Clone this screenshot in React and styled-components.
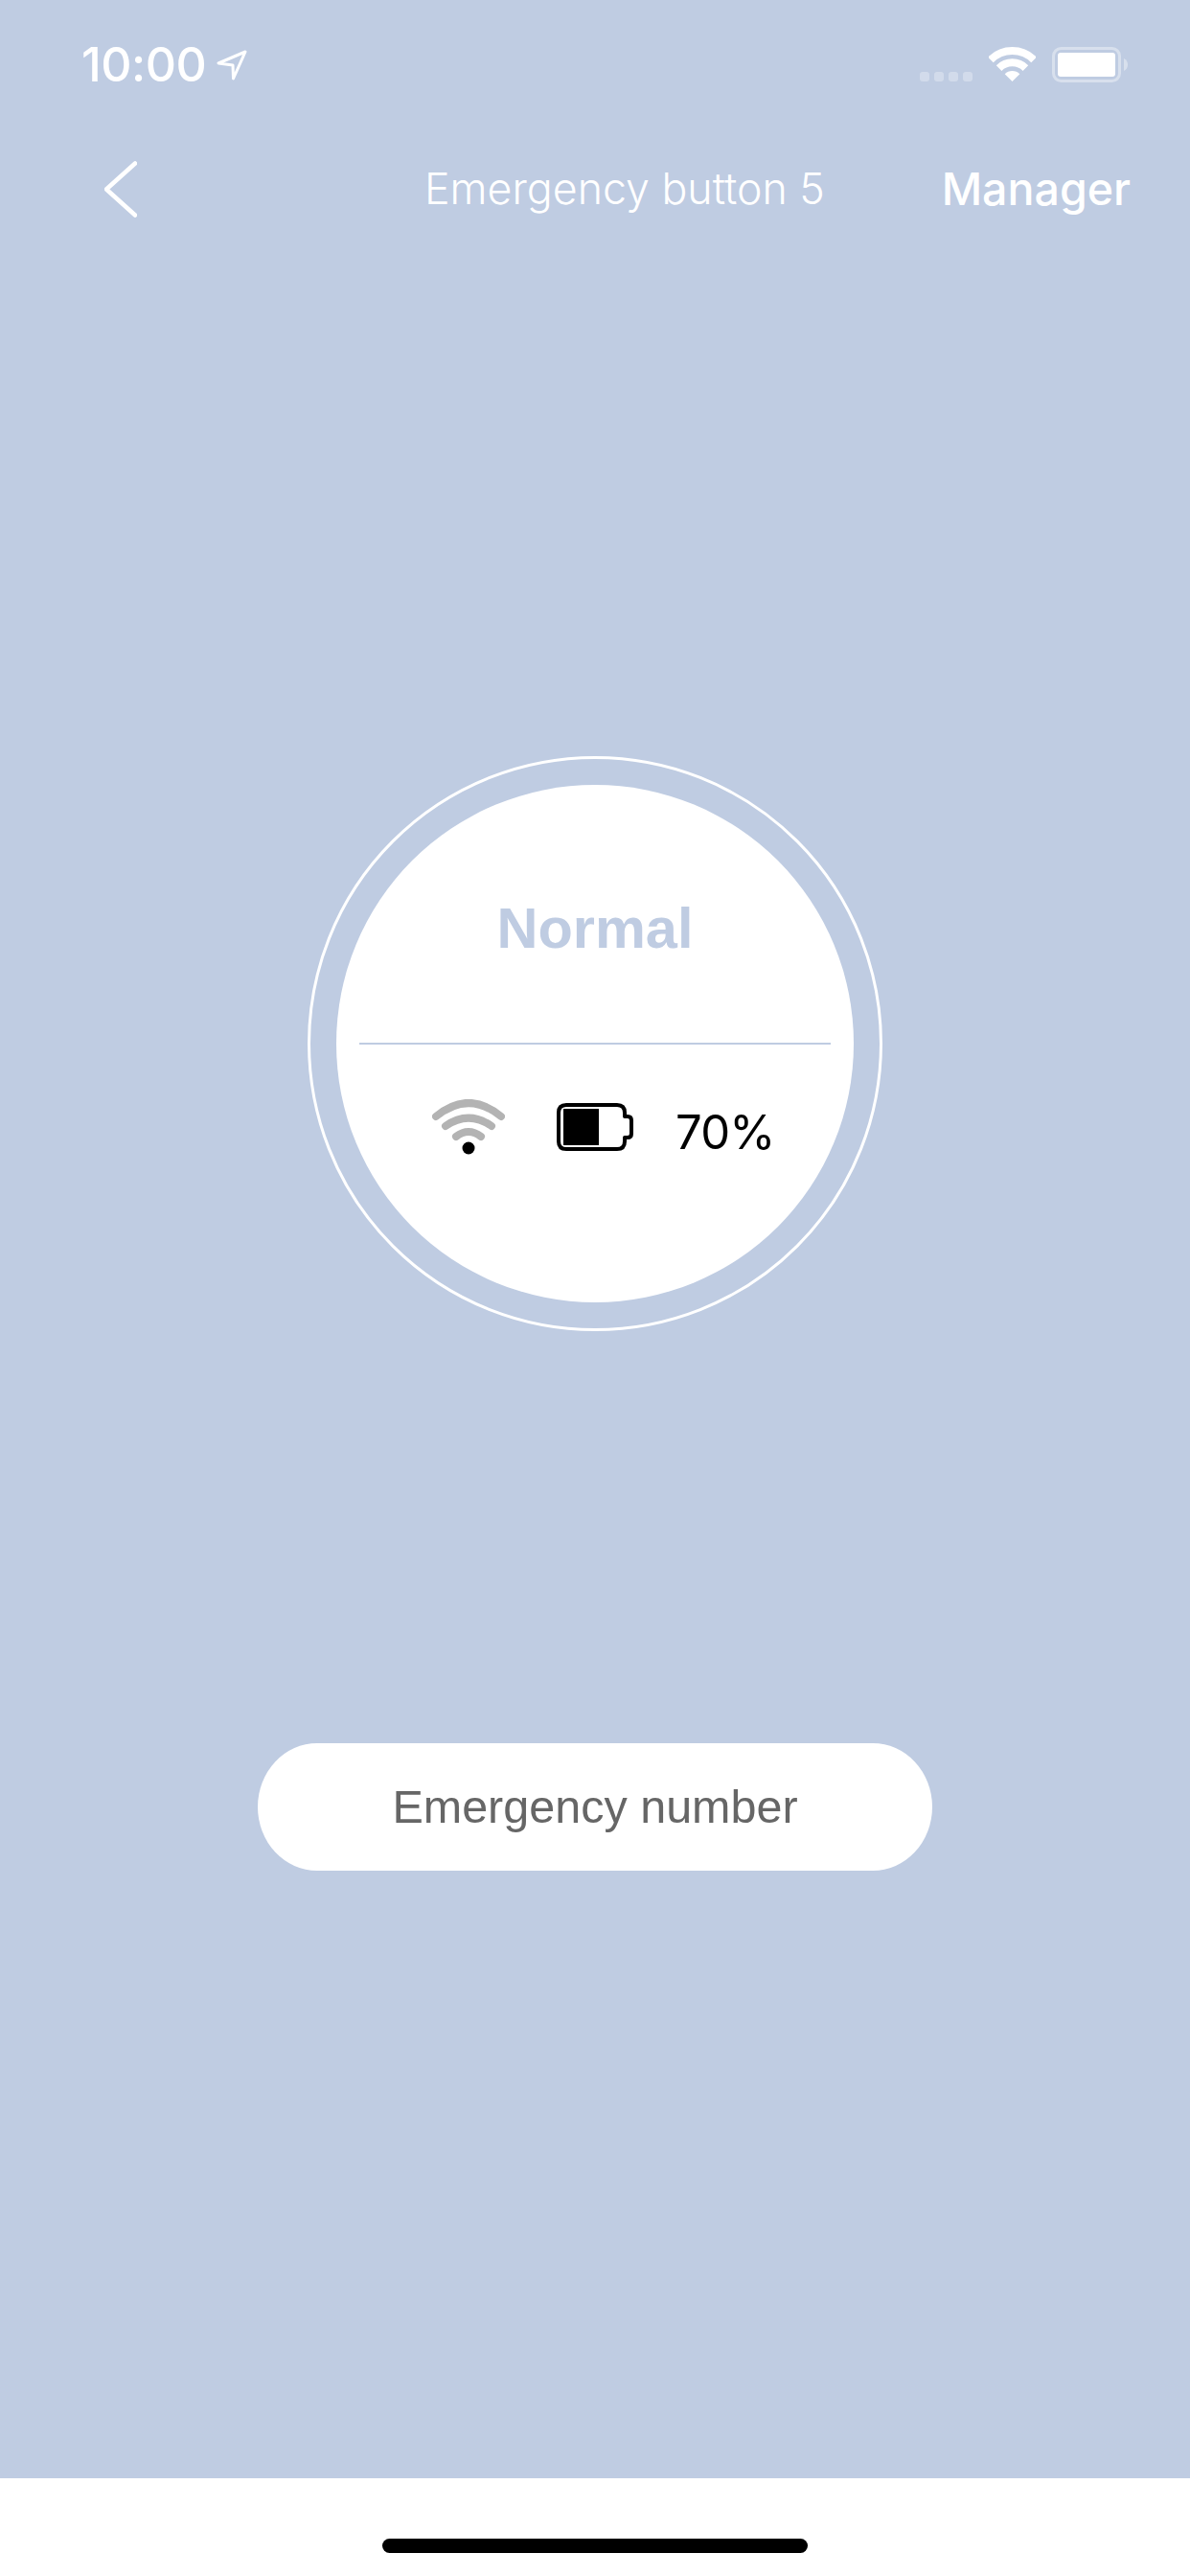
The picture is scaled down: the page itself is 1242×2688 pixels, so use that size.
import styled, { createGlobalStyle } from 'styled-components';

const brand = '#bfcce2';

const GlobalStyle = createGlobalStyle`
  html, body {
    margin: 0;
    padding: 0;
    background: #fff;
  }
`;

const Page = styled.div`
  width: 1242px;
  height: 2688px;
  display: flex;
  flex-direction: column;
  overflow: hidden;
`;

const Main = styled.main`
  flex: 1;
  background: ${brand};
  display: flex;
  flex-direction: column;
`;

const StatusBar = styled.div`
  box-sizing: border-box;
  height: 86px;
  padding: 49px 65px 0 85px;
  display: flex;
  justify-content: space-between;
  align-items: center;
`;

const TimeGroup = styled.div`
  display: flex;
  align-items: center;
  gap: 11px;
`;

const Time = styled.span`
  font: 500 50px/37px Inter, sans-serif;
  letter-spacing: -0.5px;
  color: #fff;
`;

const ArrowIcon = styled.svg`
  display: block;
`;

const StatusIcons = styled.div`
  display: flex;
  align-items: flex-start;
  height: 37px;
`;

const SignalDots = styled.div`
  display: flex;
  gap: 5px;
  margin: 26px 17px 0 0;
`;

const SignalDot = styled.span`
  width: 10px;
  height: 10px;
  border-radius: 3px;
  background: rgba(255, 255, 255, 0.3);
`;

const StatusWifi = styled.svg`
  display: block;
  margin-right: 17px;
`;

const StatusBattery = styled.svg`
  display: block;
`;

const Nav = styled.nav`
  box-sizing: border-box;
  height: 59px;
  margin-top: 82px;
  padding: 0 62px 0 109px;
  display: flex;
  align-items: center;
`;

const BackIcon = styled.svg`
  display: block;
`;

const NavTitle = styled.span`
  margin-left: 300px;
  font: 300 44.7px/1 Inter, sans-serif;
  color: #fff;
`;

const NavAction = styled.span`
  margin-left: auto;
  font: 500 46.5px/1 Inter, sans-serif;
  color: #fff;
`;

const Ring = styled.div`
  box-sizing: border-box;
  width: 600px;
  height: 600px;
  margin: 562px auto 0;
  border: 3px solid #fff;
  border-radius: 50%;
  display: flex;
  align-items: center;
  justify-content: center;
`;

const Dial = styled.div`
  width: 540px;
  height: 540px;
  border-radius: 50%;
  background: #fff;
  display: flex;
  flex-direction: column;
  align-items: center;
`;

const StateLabel = styled.div`
  height: 269px;
  padding-top: 117px;
  box-sizing: border-box;
  font: 700 59.5px/66px "Liberation Sans", Arial, sans-serif;
  color: ${brand};
`;

const Divider = styled.div`
  flex: none;
  width: 492px;
  height: 2px;
  background: ${brand};
`;

const Readings = styled.div`
  align-self: stretch;
  height: 58px;
  margin-top: 57px;
  padding-left: 100px;
  display: flex;
  align-items: center;
`;

const DeviceWifi = styled.svg`
  display: block;
`;

const DeviceBattery = styled.svg`
  display: block;
  margin-left: 54px;
`;

const Percent = styled.span`
  margin: 10px 0 0 44px;
  font: 400 49px/1 Inter, sans-serif;
  letter-spacing: -0.8px;
  color: #000;
`;

const NumberButton = styled.button`
  display: block;
  width: 704px;
  height: 133px;
  margin: 430px auto 0;
  padding: 0;
  border: none;
  border-radius: 62px / 66.5px;
  background: #fff;
  font: 400 48.5px/1 "Liberation Sans", Arial, sans-serif;
  color: #666;
`;

const HomeArea = styled.div`
  flex: none;
  box-sizing: border-box;
  height: 102px;
  padding-top: 63px;
  background: #fff;
`;

const HomeBar = styled.div`
  width: 444px;
  height: 15px;
  margin: 0 auto;
  border-radius: 8px;
  background: #000;
`;

function App() {
  return (
    <Page>
      <GlobalStyle />
      <Main>
        <StatusBar>
          <TimeGroup>
            <Time>10:00</Time>
            <ArrowIcon width="32" height="32" viewBox="0 0 32 32" fill="none">
              <path d="M30 2 L2 14 L17 16 L17.5 30 Z" stroke="#fff" strokeWidth="3" strokeLinejoin="round" />
            </ArrowIcon>
          </TimeGroup>
          <StatusIcons>
            <SignalDots>
              {[0, 1, 2, 3].map((i) => <SignalDot key={i} />)}
            </SignalDots>
            <StatusWifi width="49" height="36" viewBox="0 0 49 36" fill="none">
              <path d="M1.9 13.4 A32 32 0 0 1 47.1 13.4" stroke="#fff" strokeWidth="8" />
              <path d="M10.6 22.1 A19.7 19.7 0 0 1 38.4 22.1" stroke="#fff" strokeWidth="8" />
              <path d="M16.7 28.2 A11 11 0 0 1 32.3 28.2 L24.5 36 Z" fill="#fff" />
            </StatusWifi>
            <StatusBattery width="79" height="37" viewBox="0 0 79 37" fill="none">
              <rect x="1.5" y="1.5" width="69" height="34" rx="8" stroke="#fff" strokeOpacity="0.4" strokeWidth="3" />
              <rect x="6" y="6" width="60" height="25" rx="3" fill="#fff" />
              <path d="M75 12 C78 13.5 79 16 79 18.5 C79 21 78 23.5 75 25 Z" fill="#fff" fillOpacity="0.4" />
            </StatusBattery>
          </StatusIcons>
        </StatusBar>

        <Nav>
          <BackIcon width="34" height="59" viewBox="0 0 34 59" fill="none">
            <path d="M32 2.5 L2 29.5 L32 56.5" stroke="#fff" strokeWidth="4.5" strokeLinecap="round" strokeLinejoin="round" />
          </BackIcon>
          <NavTitle>Emergency button 5</NavTitle>
          <NavAction>Manager</NavAction>
        </Nav>

        <Ring>
          <Dial>
            <StateLabel>Normal</StateLabel>
            <Divider />
            <Readings>
              <DeviceWifi width="76" height="58" viewBox="0 0 76 58" fill="none">
                <path d="M4 18 Q38 -10 72 18" stroke="#b3b3b3" strokeWidth="8" strokeLinecap="round" />
                <path d="M14 28 Q38 11.4 62 28" stroke="#b3b3b3" strokeWidth="8" strokeLinecap="round" />
                <path d="M25 39 Q38 29 51 39" stroke="#b3b3b3" strokeWidth="8" strokeLinecap="round" />
                <circle cx="38" cy="51" r="6.5" fill="#000" />
              </DeviceWifi>
              <DeviceBattery width="80" height="50" viewBox="0 0 80 50" fill="none">
                <path d="M10 2 H63 Q71 2 71 10 V14 H74 Q78 14 78 18 V32 Q78 36 74 36 H71 V40 Q71 48 63 48 H10 Q2 48 2 40 V10 Q2 2 10 2 Z" stroke="#000" strokeWidth="4" strokeLinejoin="round" />
                <rect x="7" y="6" width="37" height="38" fill="#000" />
              </DeviceBattery>
              <Percent>70%</Percent>
            </Readings>
          </Dial>
        </Ring>

        <NumberButton>Emergency number</NumberButton>
      </Main>
      <HomeArea>
        <HomeBar />
      </HomeArea>
    </Page>
  );
}

export default App;
